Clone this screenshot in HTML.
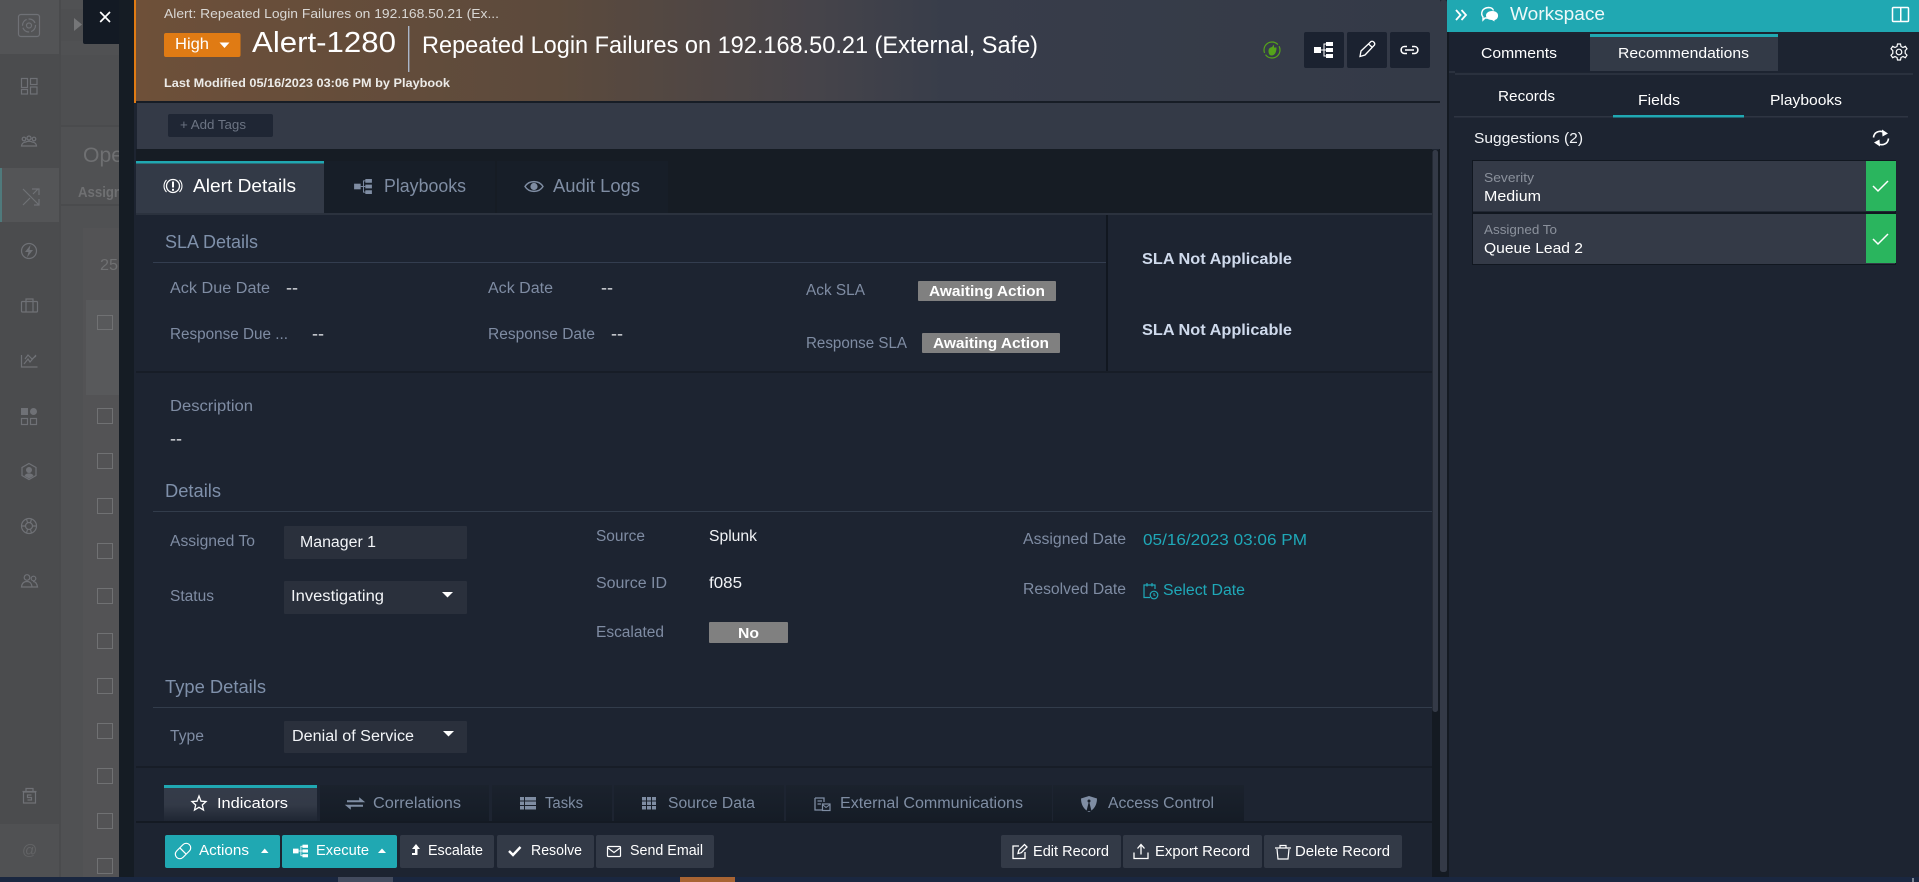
<!DOCTYPE html>
<html><head><meta charset="utf-8"><title>Alert-1280</title>
<style>
html,body{margin:0;padding:0;background:#1d2431;overflow:hidden}
svg{display:block;position:absolute;left:0;top:0}
text{font-family:"Liberation Sans",sans-serif;white-space:pre}
.l{fill:#7f8ca3;font-size:15.5px}
.w{fill:#f2f4f7;font-size:15.5px}
.h{fill:#7f90aa;font-size:18.5px}
.b{fill:#fff;font-size:15px}
.t{fill:#7f8da3;font-size:15.5px}
.g{fill:none;stroke:#6f7176;stroke-width:1.2}
.gf{fill:#6f7176}
.ic{fill:none;stroke:#fff;stroke-width:1.4}
</style></head><body>
<svg width="1919" height="882" viewBox="0 0 1919 882" xmlns="http://www.w3.org/2000/svg">
<defs>
<symbol id="pb" viewBox="0 0 19 16" overflow="visible"><rect x="0" y="5" width="7" height="6"/><rect x="12" y="0" width="7" height="4"/><rect x="12" y="6" width="7" height="4"/><rect x="12" y="12" width="7" height="4"/><rect x="7" y="7.5" width="5" height="1"/><rect x="9.5" y="2" width="1" height="12"/><rect x="9.5" y="1.5" width="3" height="1"/><rect x="9.5" y="13.5" width="3" height="1"/></symbol>
<linearGradient id="hd" x1="0" x2="1" y1="0" y2="0"><stop offset="0" stop-color="#6e5039"/><stop offset=".32" stop-color="#5c4a3c"/><stop offset=".52" stop-color="#46444a"/><stop offset=".62" stop-color="#383d4a"/><stop offset="1" stop-color="#343a47"/></linearGradient>
<linearGradient id="it" x1="0" x2="0" y1="0" y2="1"><stop offset="0" stop-color="#353c4a"/><stop offset=".55" stop-color="#333a47"/><stop offset="1" stop-color="#1f2633"/></linearGradient>
<linearGradient id="ot" x1="0" x2="0" y1="0" y2="1"><stop offset="0" stop-color="#1b222d"/><stop offset="1" stop-color="#151c26"/></linearGradient>
</defs>

<!-- base -->
<rect width="1919" height="882" fill="#1d2431"/>

<!-- dimmed left sidebar -->
<rect x="0" y="0" width="60" height="877" fill="#4b4c4e"/>
<rect x="0" y="0" width="60" height="54" fill="#535456"/>
<rect x="0" y="168" width="59" height="54" fill="#545557"/>
<rect x="0" y="168" width="2" height="54" fill="#4f7a7c"/>
<rect x="0" y="824" width="59" height="53" fill="#505153"/>
<rect x="59" y="0" width="2" height="877" fill="#4a4b4d"/>
<rect x="61" y="0" width="58" height="877" fill="#505153"/>
<rect x="61" y="9" width="58" height="32" fill="#4e4f51"/>
<rect x="61" y="55" width="58" height="70" fill="#4e4f51"/>
<rect x="61" y="125" width="58" height="2" fill="#4a4b4d"/>
<rect x="61" y="204" width="58" height="2" fill="#4a4b4d"/>
<rect x="83" y="228" width="36" height="649" fill="#535355"/>
<rect x="86" y="300" width="33" height="95" fill="#58595b"/>
<path d="M74 18L82 24.5L74 31Z" fill="#757678"/>
<text x="83" y="162" font-size="21" fill="#6f7072" textLength="40" lengthAdjust="spacingAndGlyphs">Ope</text>
<text x="78" y="197" font-size="15" font-weight="bold" fill="#6f7072" textLength="44" lengthAdjust="spacingAndGlyphs">Assign</text>
<text x="100" y="270" font-size="16" fill="#6f7072" textLength="18" lengthAdjust="spacingAndGlyphs">25</text>
<g fill="none" stroke="#707173" stroke-width="1">
<rect x="97.5" y="315.5" width="15" height="14"/><rect x="97.5" y="408.5" width="15" height="15"/><rect x="97.5" y="453.5" width="15" height="15"/><rect x="97.5" y="498.5" width="15" height="15"/><rect x="97.5" y="543.5" width="15" height="15"/><rect x="97.5" y="588.5" width="15" height="15"/><rect x="97.5" y="633.5" width="15" height="15"/><rect x="97.5" y="678.5" width="15" height="15"/><rect x="97.5" y="723.5" width="15" height="15"/><rect x="97.5" y="768.5" width="15" height="15"/><rect x="97.5" y="813.5" width="15" height="15"/><rect x="97.5" y="858.5" width="15" height="15"/>
</g>
<!-- sidebar icons -->
<g class="g">
<rect x="18.5" y="14.5" width="21" height="22" rx="2.5"/>
<circle cx="29" cy="25.5" r="6.5" stroke-dasharray="8 2"/><circle cx="29" cy="25.5" r="2.5"/>
<rect x="21.5" y="78.5" width="6" height="9"/><rect x="21.5" y="89.5" width="6" height="4.5"/><rect x="30.5" y="78.5" width="6.5" height="6"/><rect x="30.5" y="87" width="6.5" height="7"/>
<circle cx="24" cy="139" r="1.8"/><circle cx="29" cy="138" r="2"/><circle cx="34" cy="139" r="1.8"/>
<path d="M21.5 146C22 142 26 142 26 142C27 141 31 141 32 142C32 142 36 142 36.5 146ZM21 146H37"/>
<path d="M23 189L39 205M34 205H39V199M23 205L30 198M33 194L38 189M32 189H39V195"/>
<circle cx="29" cy="251" r="7.5"/>
<rect x="21.5" y="301.5" width="16" height="10.5" rx="1"/><path d="M26 301.5V299H33V301.5M26 301.5V312M33 301.5V312"/>
<path d="M21.5 355V367H37.5M24 364L28 359L30 362L36 355M25 359L28 355L32 359L36 356"/>
<rect x="21.5" y="418.5" width="6" height="6"/><rect x="30.5" y="418.5" width="6" height="6"/>
<path d="M29 463.5L36 467.5V475.5L29 479.5L22 475.5V467.5Z"/>
<circle cx="29" cy="526" r="7.5"/><circle cx="29" cy="526" r="3.5"/><path d="M26.5 519L27.5 522.5M31.5 519L30.5 522.5M22 526H25M33 526H36M26.5 533L27.5 529.5M31.5 533L30.5 529.5"/>
<circle cx="27" cy="577.5" r="2.8"/><circle cx="33.5" cy="578.5" r="2.3"/><path d="M21.5 587C22 582 25 581.5 27 581.5C30 581.5 31.5 583 32 587ZM33 581.5C36 581.5 37 584 37.5 587H32"/>
<path d="M23.5 792H35.5V803H23.5ZM22.5 791.5H36.5M26 791.5V788.5H33V791.5M31.5 795H27.5V797.5H31.5V800H27.5"/>
</g>
<g class="gf">
<rect x="21" y="408" width="7" height="7"/><circle cx="33.5" cy="411.5" r="3.5"/>
<path d="M30.5 245L25 252H28.5L27 257.5L33 250H29.5Z" fill="#6f7176"/>
<circle cx="29" cy="470" r="3"/><path d="M24.5 476C25.5 472.5 32.5 472.5 33.5 476L29 478.5Z"/>
</g>
<text x="22" y="855" font-size="15" fill="#636466">@</text>

<!-- dark strip + close box -->
<rect x="119" y="0" width="15" height="877" fill="#151c24"/>
<path d="M83 0H119V44H85Q83 44 83 42Z" fill="#131a24"/>
<path d="M100.2 12L110 22M110 12L100.2 22" stroke="#fff" stroke-width="1.7" fill="none"/>

<!-- header -->
<rect x="134" y="0" width="1306" height="101" fill="url(#hd)"/>
<rect x="134" y="0" width="2" height="103" fill="#e07b14"/>
<rect x="136" y="101" width="1304" height="2" fill="#171d26"/>
<text x="164" y="18" font-size="13" fill="#d9d7d4" textLength="335" lengthAdjust="spacingAndGlyphs">Alert: Repeated Login Failures on 192.168.50.21 (Ex...</text>
<rect x="164" y="33" width="76.5" height="24" rx="2" fill="#e07b14"/>
<text x="175" y="49" font-size="16" fill="#fff" textLength="34" lengthAdjust="spacingAndGlyphs">High</text>
<path d="M219.5 42.5H229.5L224.5 48Z" fill="#fff"/>
<text x="252" y="52" font-size="29" fill="#fff" textLength="144" lengthAdjust="spacingAndGlyphs">Alert-1280</text>
<rect x="408" y="26" width="1.4" height="46" fill="#aab6c9"/>
<text x="422" y="53" font-size="24" fill="#fff" textLength="616" lengthAdjust="spacingAndGlyphs">Repeated Login Failures on 192.168.50.21 (External, Safe)</text>
<text x="164" y="87" font-size="11.5" font-weight="bold" fill="#ecebe8" textLength="286" lengthAdjust="spacingAndGlyphs">Last Modified 05/16/2023 03:06 PM by Playbook</text>
<!-- header right -->
<circle cx="1272" cy="50" r="8" fill="none" stroke="#55a31a" stroke-width="1.2" stroke-dasharray="20 2 22 2"/>
<path d="M1268.5 51C1268.5 47.5 1271 47.5 1272 47L1274 44.5V47.5L1276.5 47.5C1276.5 52 1275 55.5 1271.5 55.5C1269.5 55.5 1268.5 53.5 1268.5 51Z" fill="#55a31a"/>
<rect x="1304" y="32" width="40" height="36" rx="2" fill="#1b2230"/>
<rect x="1347" y="32" width="40" height="36" rx="2" fill="#1b2230"/>
<rect x="1390" y="32" width="40" height="36" rx="2" fill="#1b2230"/>
<use href="#pb" x="1314" y="42" width="19" height="16" fill="#fff"/>
<path d="M1360 56.5L1361 51L1371 41.5C1373 40.5 1375.5 43 1374.5 45L1365 55ZM1368.5 44L1372.5 47.5" fill="none" stroke="#fff" stroke-width="1.3"/>
<path d="M1407 46.5H1404.5C1400 46.5 1400 53.5 1404.5 53.5H1407M1412 46.5H1414.5C1419 46.5 1419 53.5 1414.5 53.5H1412M1405 50H1414" fill="none" stroke="#fff" stroke-width="1.6"/>

<!-- tags bar -->
<rect x="137" y="103" width="1303" height="46" fill="#343a47"/>
<rect x="168" y="114" width="105" height="23" rx="2" fill="#1f2634"/>
<text x="180" y="129" font-size="13" fill="#6c7483" textLength="66" lengthAdjust="spacingAndGlyphs">+ Add Tags</text>

<!-- top tabs -->
<rect x="136" y="149" width="1296" height="66" fill="#161c24"/>
<rect x="324" y="161" width="171" height="52" fill="#171e28"/>
<rect x="497" y="161" width="171" height="52" fill="#171e28"/>
<rect x="136" y="213" width="1296" height="2" fill="#2b323e"/>
<rect x="136" y="161" width="188" height="52" fill="#333a47"/>
<rect x="136" y="161" width="188" height="2.5" fill="#20a8b2"/>
<circle cx="173" cy="186" r="6.5" fill="none" stroke="#fff" stroke-width="1.3"/>
<path d="M166.5 180A8.5 8.5 0 0 0 166.5 192M179.5 180A8.5 8.5 0 0 1 179.5 192" fill="none" stroke="#fff" stroke-width="1.1"/>
<rect x="172" y="181.5" width="2" height="6" fill="#fff"/><rect x="172" y="188.8" width="2" height="2" fill="#fff"/>
<text x="193" y="192" font-size="18" fill="#fff" textLength="103" lengthAdjust="spacingAndGlyphs">Alert Details</text>
<use href="#pb" x="354" y="179" width="18" height="15" fill="#7f8da3"/>
<text x="384" y="192" font-size="18" fill="#7f8da3" textLength="82" lengthAdjust="spacingAndGlyphs">Playbooks</text>
<path d="M525 186.5C529 180 539 180 543 186.5C539 193 529 193 525 186.5Z" fill="none" stroke="#7f8da3" stroke-width="1.4"/><circle cx="534" cy="186.5" r="3.6" fill="#7f8da3"/>
<text x="553" y="192" font-size="18" fill="#7f8da3" textLength="87" lengthAdjust="spacingAndGlyphs">Audit Logs</text>

<!-- SLA -->
<text x="165" y="248" class="h" textLength="93" lengthAdjust="spacingAndGlyphs">SLA Details</text>
<rect x="153" y="262" width="953" height="1" fill="#333d4f"/>
<rect x="1106" y="215" width="2" height="157" fill="#111720"/>
<text x="170" y="293" class="l" textLength="100" lengthAdjust="spacingAndGlyphs">Ack Due Date</text>
<text x="286" y="293" class="w" textLength="12" lengthAdjust="spacingAndGlyphs">--</text>
<text x="488" y="293" class="l" textLength="65" lengthAdjust="spacingAndGlyphs">Ack Date</text>
<text x="601" y="293" class="w" textLength="12" lengthAdjust="spacingAndGlyphs">--</text>
<text x="806" y="295" class="l" textLength="59" lengthAdjust="spacingAndGlyphs">Ack SLA</text>
<rect x="918" y="281" width="138" height="20" rx="1" fill="#808080"/>
<text x="929" y="296" font-size="14.5" font-weight="bold" fill="#fff" textLength="116" lengthAdjust="spacingAndGlyphs">Awaiting Action</text>
<text x="1142" y="264" font-size="16" font-weight="bold" fill="#cfdaec" textLength="150" lengthAdjust="spacingAndGlyphs">SLA Not Applicable</text>
<text x="170" y="339" class="l" textLength="118" lengthAdjust="spacingAndGlyphs">Response Due ...</text>
<text x="312" y="339" class="w" textLength="12" lengthAdjust="spacingAndGlyphs">--</text>
<text x="488" y="339" class="l" textLength="107" lengthAdjust="spacingAndGlyphs">Response Date</text>
<text x="611" y="339" class="w" textLength="12" lengthAdjust="spacingAndGlyphs">--</text>
<text x="806" y="348" class="l" textLength="101" lengthAdjust="spacingAndGlyphs">Response SLA</text>
<rect x="922" y="333" width="138" height="20" rx="1" fill="#808080"/>
<text x="933" y="348" font-size="14.5" font-weight="bold" fill="#fff" textLength="116" lengthAdjust="spacingAndGlyphs">Awaiting Action</text>
<text x="1142" y="335" font-size="16" font-weight="bold" fill="#cfdaec" textLength="150" lengthAdjust="spacingAndGlyphs">SLA Not Applicable</text>
<rect x="136" y="371" width="1296" height="2" fill="#171d27"/>

<!-- description -->
<text x="170" y="411" class="l" textLength="83" lengthAdjust="spacingAndGlyphs">Description</text>
<text x="170" y="444" class="w" textLength="12" lengthAdjust="spacingAndGlyphs">--</text>

<!-- details -->
<text x="165" y="497" class="h" textLength="56" lengthAdjust="spacingAndGlyphs">Details</text>
<rect x="153" y="511" width="1279" height="1" fill="#323c4b"/>
<text x="170" y="546" class="l" textLength="85" lengthAdjust="spacingAndGlyphs">Assigned To</text>
<rect x="284" y="526" width="183" height="33" rx="1" fill="#2a303c"/>
<text x="300" y="547" class="w" textLength="76" lengthAdjust="spacingAndGlyphs">Manager 1</text>
<text x="170" y="601" class="l" textLength="44" lengthAdjust="spacingAndGlyphs">Status</text>
<rect x="284" y="581" width="183" height="33" rx="1" fill="#2a303c"/>
<text x="291" y="601" class="w" textLength="93" lengthAdjust="spacingAndGlyphs">Investigating</text>
<path d="M442 592H453L447.5 597.5Z" fill="#fff"/>
<text x="596" y="541" class="l" textLength="49" lengthAdjust="spacingAndGlyphs">Source</text>
<text x="709" y="541" class="w" textLength="48" lengthAdjust="spacingAndGlyphs">Splunk</text>
<text x="596" y="588" class="l" textLength="71" lengthAdjust="spacingAndGlyphs">Source ID</text>
<text x="709" y="588" class="w" textLength="33" lengthAdjust="spacingAndGlyphs">f085</text>
<text x="596" y="637" class="l" textLength="68" lengthAdjust="spacingAndGlyphs">Escalated</text>
<rect x="709" y="622" width="79" height="21" rx="1" fill="#808080"/>
<text x="738" y="638" font-size="15" font-weight="bold" fill="#fff" textLength="21" lengthAdjust="spacingAndGlyphs">No</text>
<text x="1023" y="544" class="l" textLength="103" lengthAdjust="spacingAndGlyphs">Assigned Date</text>
<text x="1143" y="545" font-size="15.5" fill="#1fa8b8" textLength="164" lengthAdjust="spacingAndGlyphs">05/16/2023 03:06 PM</text>
<text x="1023" y="594" class="l" textLength="103" lengthAdjust="spacingAndGlyphs">Resolved Date</text>
<path d="M1150 597.5H1144V585H1155V589M1147 583V586.5M1152 583V586.5" fill="none" stroke="#1fa8b8" stroke-width="1.2"/><circle cx="1154" cy="595" r="3.8" fill="none" stroke="#1fa8b8" stroke-width="1.2"/><path d="M1154 593V595.3H1155.5" fill="none" stroke="#1fa8b8"/>
<text x="1163" y="595" font-size="15.5" fill="#1fa8b8" textLength="82" lengthAdjust="spacingAndGlyphs">Select Date</text>

<!-- type details -->
<text x="165" y="693" class="h" textLength="101" lengthAdjust="spacingAndGlyphs">Type Details</text>
<rect x="153" y="707" width="1279" height="1" fill="#323c4b"/>
<text x="170" y="741" class="l" textLength="34" lengthAdjust="spacingAndGlyphs">Type</text>
<rect x="284" y="721" width="183" height="32" rx="1" fill="#2a303c"/>
<text x="292" y="741" class="w" textLength="122" lengthAdjust="spacingAndGlyphs">Denial of Service</text>
<path d="M443 731H454L448.5 736.5Z" fill="#fff"/>
<rect x="136" y="766" width="1296" height="2" fill="#171d27"/>

<!-- bottom tabs -->
<rect x="320" y="785" width="169" height="36" fill="url(#ot)"/>
<rect x="492" y="785" width="120" height="36" fill="url(#ot)"/>
<rect x="614" y="785" width="170" height="36" fill="url(#ot)"/>
<rect x="786" y="785" width="266" height="36" fill="url(#ot)"/>
<rect x="1053" y="785" width="191" height="36" fill="url(#ot)"/>
<rect x="164" y="785" width="153" height="36" fill="url(#it)"/>
<rect x="164" y="785" width="153" height="3" fill="#20a8b2"/>
<path d="M199 796L201 801.2L206 801.5L202.3 805L203.5 810L199 807.3L194.5 810L195.7 805L192 801.5L197 801.2Z" fill="none" stroke="#fff" stroke-width="1.3"/>
<text x="217" y="808" class="b" textLength="71" lengthAdjust="spacingAndGlyphs">Indicators</text>
<path d="M347 801H360V799L363 801.5H347M363 806H350V808L347 805.5H363" fill="none" stroke="#7f8da3" stroke-width="1.6"/>
<text x="373" y="808" class="t" textLength="88" lengthAdjust="spacingAndGlyphs">Correlations</text>
<g fill="#7f8da3"><rect x="520" y="797" width="4" height="3.5"/><rect x="525" y="797" width="11" height="3.5"/><rect x="520" y="801.5" width="4" height="3.5"/><rect x="525" y="801.5" width="11" height="3.5"/><rect x="520" y="806" width="4" height="3.5"/><rect x="525" y="806" width="11" height="3.5"/></g>
<text x="545" y="808" class="t" textLength="38" lengthAdjust="spacingAndGlyphs">Tasks</text>
<g fill="#7f8da3"><rect x="642" y="797" width="4" height="3.5"/><rect x="647" y="797" width="4" height="3.5"/><rect x="652" y="797" width="4" height="3.5"/><rect x="642" y="801.5" width="4" height="3.5"/><rect x="647" y="801.5" width="4" height="3.5"/><rect x="652" y="801.5" width="4" height="3.5"/><rect x="642" y="806" width="4" height="3.5"/><rect x="647" y="806" width="4" height="3.5"/><rect x="652" y="806" width="4" height="3.5"/></g>
<text x="668" y="808" class="t" textLength="87" lengthAdjust="spacingAndGlyphs">Source Data</text>
<path d="M815 798H824V802M815 798V810H822M817.5 801H822M817.5 804H821" fill="none" stroke="#7f8da3" stroke-width="1.3"/><rect x="822.5" y="804" width="7.5" height="6.5" fill="none" stroke="#7f8da3" stroke-width="1.2"/><path d="M822.5 804.5L826 807.5L830 804.5" fill="none" stroke="#7f8da3"/>
<text x="840" y="808" class="t" textLength="183" lengthAdjust="spacingAndGlyphs">External Communications</text>
<path d="M1089 796L1097 798.5C1097 805 1094 809.5 1089 812C1084 809.5 1081 805 1081 798.5Z" fill="#7f8da3"/><path d="M1089 801L1086.5 811H1091.5Z" fill="#171e28"/><circle cx="1089" cy="801" r="1.5" fill="#171e28"/>
<text x="1108" y="808" class="t" textLength="106" lengthAdjust="spacingAndGlyphs">Access Control</text>
<rect x="136" y="821" width="1300" height="2" fill="#141a23"/>

<!-- footer -->
<rect x="136" y="823" width="1300" height="54" fill="#1d2431"/>
<rect x="165" y="835" width="115" height="33" rx="2" fill="#20a8b2"/>
<rect x="282" y="835" width="115" height="33" rx="2" fill="#20a8b2"/>
<rect x="400" y="835" width="94" height="33" rx="2" fill="#333a47"/>
<rect x="497" y="835" width="97" height="33" rx="2" fill="#333a47"/>
<rect x="596" y="835" width="118" height="33" rx="2" fill="#333a47"/>
<rect x="1001" y="835" width="120" height="33" rx="2" fill="#333a47"/>
<rect x="1123" y="835" width="139" height="33" rx="2" fill="#333a47"/>
<rect x="1264" y="835" width="138" height="33" rx="2" fill="#333a47"/>
<g transform="rotate(-45 183 851)" fill="none" stroke="#fff" stroke-width="1.2"><rect x="174" y="846.5" width="18" height="9" rx="4.5"/><path d="M183 846.5V855.5"/></g>
<text x="199" y="855" class="b" textLength="50" lengthAdjust="spacingAndGlyphs">Actions</text>
<path d="M261 853H268.5L264.7 848.5Z" fill="#fff"/>
<use href="#pb" x="293" y="844" width="15" height="14" fill="#fff"/>
<text x="316" y="855" class="b" textLength="53" lengthAdjust="spacingAndGlyphs">Execute</text>
<path d="M378 853H386L382 848.5Z" fill="#fff"/>
<path d="M416 844L420 849H417.5V855H412V853H415V849H412Z" fill="#fff"/>
<text x="428" y="855" class="b" textLength="55" lengthAdjust="spacingAndGlyphs">Escalate</text>
<path d="M509 851L513 855L520.5 847" fill="none" stroke="#fff" stroke-width="2.4"/>
<text x="531" y="855" class="b" textLength="51" lengthAdjust="spacingAndGlyphs">Resolve</text>
<rect x="607.5" y="846.5" width="13" height="10" rx="1" fill="none" stroke="#fff" stroke-width="1.2"/><path d="M608 848L614 852.5L620 848" fill="none" stroke="#fff" stroke-width="1.2"/>
<text x="630" y="855" class="b" textLength="73" lengthAdjust="spacingAndGlyphs">Send Email</text>
<path d="M1019 846H1013V858.5H1025V852" fill="none" stroke="#fff" stroke-width="1.3"/><path d="M1018 853.5L1018.8 850.2L1024.5 844.5L1027 847L1021.3 852.7Z" fill="none" stroke="#fff" stroke-width="1.3"/>
<text x="1033" y="856" class="b" textLength="76" lengthAdjust="spacingAndGlyphs">Edit Record</text>
<path d="M1134 852.5V858.5H1148V852.5M1141 854.5V845M1137.5 848.5L1141 844.5L1144.5 848.5" fill="none" stroke="#fff" stroke-width="1.3"/>
<text x="1155" y="856" class="b" textLength="95" lengthAdjust="spacingAndGlyphs">Export Record</text>
<path d="M1277 849L1278 859H1288L1289 849M1275 848H1291M1280 848V845.5H1286V848" fill="none" stroke="#fff" stroke-width="1.2"/>
<text x="1295" y="856" class="b" textLength="95" lengthAdjust="spacingAndGlyphs">Delete Record</text>

<!-- scrollbars -->
<rect x="1432" y="150" width="7" height="727" fill="#141a22"/>
<rect x="1436" y="823" width="11" height="54" fill="#141a22"/>
<rect x="1432.5" y="150" width="5.5" height="562" rx="2.5" fill="#343a47"/>
<rect x="1439" y="149" width="8" height="728" fill="#141a22"/>
<rect x="1440" y="0" width="7" height="872" rx="2.5" fill="#343a47"/>

<!-- bottom strip -->
<rect x="0" y="877" width="1919" height="5" fill="#1a2740"/>
<rect x="338" y="877" width="55" height="5" fill="#434b5e"/>
<rect x="680" y="877" width="55" height="5" fill="#a86433"/>

<!-- workspace -->
<rect x="1447" y="0" width="472" height="877" fill="#1d2431"/>
<rect x="1447" y="0" width="2" height="877" fill="#141a22"/>
<rect x="1447" y="0" width="472" height="32" fill="#20a8b2"/>
<path d="M1456 10L1460.5 15L1456 20M1461.5 10L1466 15L1461.5 20" fill="none" stroke="#fff" stroke-width="1.8"/>
<path d="M1488 18H1485L1483 20V17C1480.5 14 1481.5 8 1488.5 7.5C1491.5 7.5 1493 9 1493.5 10.5" fill="none" stroke="#fff" stroke-width="1.4"/>
<path d="M1492 11C1497 11 1498.5 14 1498 16.5C1497.5 19 1495.5 20 1494.5 20V21.5L1492 20C1488 20 1486 18 1486 15.5C1486 13 1488.5 11 1492 11Z" fill="#fff"/>
<text x="1510" y="20" font-size="18" fill="#edf9f9" textLength="95" lengthAdjust="spacingAndGlyphs">Workspace</text>
<rect x="1892.5" y="7.5" width="16" height="14" rx="1" fill="none" stroke="#fff" stroke-width="1.5"/><rect x="1900" y="7.5" width="1.5" height="14" fill="#fff"/>
<rect x="1449" y="34" width="141" height="38" fill="#1b2230"/>
<rect x="1590" y="34" width="188" height="37" fill="#333a47"/>
<rect x="1590" y="34" width="188" height="3" fill="#20a8b2"/>
<rect x="1449" y="71" width="6" height="2" fill="#2a313e"/>
<rect x="1455" y="73" width="458" height="2" fill="#2a313e"/>
<text x="1481" y="58" font-size="15" fill="#fff" textLength="76" lengthAdjust="spacingAndGlyphs">Comments</text>
<text x="1618" y="58" font-size="15" fill="#fff" textLength="131" lengthAdjust="spacingAndGlyphs">Recommendations</text>
<path d="M1897.5 44H1900.5L1901 46.5L1903 47.5L1905.3 46.3L1907 48.8L1905.2 50.6V53.4L1907 55.2L1905.3 57.7L1903 56.5L1901 57.5L1900.5 60H1897.5L1897 57.5L1895 56.5L1892.7 57.7L1891 55.2L1892.8 53.4V50.6L1891 48.8L1892.7 46.3L1895 47.5L1897 46.5Z" fill="none" stroke="#fff" stroke-width="1.2"/><circle cx="1899" cy="52" r="2.8" fill="none" stroke="#fff" stroke-width="1.2"/>
<text x="1498" y="101" font-size="15" fill="#fff" textLength="57" lengthAdjust="spacingAndGlyphs">Records</text>
<text x="1638" y="105" font-size="15" fill="#fff" textLength="42" lengthAdjust="spacingAndGlyphs">Fields</text>
<text x="1770" y="105" font-size="15" fill="#fff" textLength="72" lengthAdjust="spacingAndGlyphs">Playbooks</text>
<rect x="1454" y="116" width="454" height="1.5" fill="#2e3542"/>
<rect x="1613" y="115" width="131" height="2.5" fill="#20a8b2"/>
<text x="1474" y="143" font-size="15" fill="#f2f4f7" textLength="109" lengthAdjust="spacingAndGlyphs">Suggestions (2)</text>
<path d="M1873.5 137.5C1874 132 1879.5 130 1884 132.2M1888.5 138.5C1888 144 1882.5 146 1878 143.8" fill="none" stroke="#fff" stroke-width="1.6"/>
<path d="M1882 129.5L1888 133.5L1882.5 136.5ZM1880 146.5L1874 142.5L1879.5 139.5Z" fill="#fff"/>
<rect x="1472" y="160" width="424" height="53" fill="#111720"/>
<rect x="1473" y="161" width="422" height="50.5" fill="#343a47"/>
<rect x="1866" y="161" width="30" height="50" fill="#2ab55e"/>
<path d="M1873 186L1878 191L1888 181" fill="none" stroke="#fff" stroke-width="1.5"/>
<text x="1484" y="182" font-size="12.5" fill="#8b919c" textLength="50" lengthAdjust="spacingAndGlyphs">Severity</text>
<text x="1484" y="201" font-size="15" fill="#fff" textLength="57" lengthAdjust="spacingAndGlyphs">Medium</text>
<rect x="1472" y="213" width="424" height="52" fill="#111720"/>
<rect x="1473" y="214" width="422" height="50" fill="#343a47"/>
<rect x="1866" y="214" width="30" height="49" fill="#2ab55e"/>
<path d="M1873 239L1878 244L1888 234" fill="none" stroke="#fff" stroke-width="1.5"/>
<text x="1484" y="234" font-size="12.5" fill="#8b919c" textLength="73" lengthAdjust="spacingAndGlyphs">Assigned To</text>
<text x="1484" y="253" font-size="15" fill="#fff" textLength="99" lengthAdjust="spacingAndGlyphs">Queue Lead 2</text>
<rect x="1912" y="878" width="2" height="4" fill="#7b8494"/>
</svg>
</body></html>
